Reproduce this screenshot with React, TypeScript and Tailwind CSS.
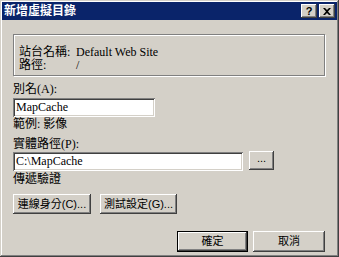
import React from "react";

const cjk = "font-['Liberation_Serif','Noto_Sans_CJK_TC',serif]";
const ui = "font-['Liberation_Sans','Noto_Sans_CJK_TC',sans-serif]";

const raised =
	"bg-[#d4d0c8] shadow-[inset_-1px_-1px_#404040,inset_1px_1px_#ffffff,inset_-2px_-2px_#808080,inset_2px_2px_#d4d0c8]";
const sunken =
	"bg-white shadow-[inset_1px_1px_#808080,inset_-1px_-1px_#ffffff,inset_2px_2px_#404040,inset_-2px_-2px_#d4d0c8]";

function Btn({
	children,
	className = "",
}: {
	children: React.ReactNode;
	className?: string;
}) {
	return (
		<div
			className={`${raised} ${ui} flex items-center justify-center text-[11px] text-black ${className}`}>
			{children}
		</div>
	);
}

export default function App() {
	return (
		<div
			className={`w-[339px] h-[257px] bg-[#d4d0c8] p-[2px] flex flex-col shadow-[inset_-1px_-1px_#404040,inset_1px_1px_#d4d0c8,inset_-2px_-2px_#808080,inset_2px_2px_#ffffff] ${cjk} text-[12px] leading-[13px] text-black`}>
			{/* title bar */}
			<div className="h-[18px] bg-[#0a246a] flex items-center pl-[2px] pr-[2px]">
				<span className="text-white font-bold text-[12px] leading-[12px] flex-1">
					新增虛擬目錄
				</span>
				<div
					className={`${raised} w-[16px] h-[14px] flex items-center justify-center font-bold text-[11px] leading-none ${ui}`}>
					?
				</div>
				<div
					className={`${raised} w-[16px] h-[14px] ml-[2px] flex items-center justify-center`}>
					<svg width="8" height="7" viewBox="0 0 8 7">
						<path
							d="M0 0h2l2 2 2-2h2L5 3.5 8 7H6L4 5 2 7H0l3-3.5z"
							fill="#000"
						/>
					</svg>
				</div>
			</div>

			<div className="flex flex-col pl-[11px] pr-[12px]">
				{/* group box */}
				<div className="mt-[14px] h-[42px] border border-[#808080] shadow-[inset_1px_1px_#ffffff,1px_1px_#ffffff] pl-[5px] pt-[11px]">
					<div className="flex h-[13px]">
						<span className="w-[57px]">站台名稱:</span>
						<span>Default Web Site</span>
					</div>
					<div className="flex h-[13px]">
						<span className="w-[57px]">路徑:</span>
						<span>/</span>
					</div>
				</div>

				<div className="mt-[7px] h-[13px]">別名(A):</div>
				<div
					className={`${sunken} mt-[2px] w-[142px] h-[19px] flex items-center pl-[3px] text-[12px]`}>
					MapCache
				</div>
				<div className="mt-[1px] h-[13px]">範例: 影像</div>

				<div className="mt-[7px] h-[13px]">實體路徑(P):</div>
				<div className="mt-[1px] flex items-center">
					<div
						className={`${sunken} w-[230px] h-[19px] flex items-center pl-[3px] text-[12px]`}>
						C:\MapCache
					</div>
					<Btn className="ml-[6px] w-[25px] h-[19px] -mt-[2px] pb-[4px]">...</Btn>
				</div>
				<div className="mt-[2px] h-[13px]">傳遞驗證</div>

				<div className="mt-[8px] flex gap-[9px]">
					<Btn className="w-[78px] h-[20px]">連線身分(C)...</Btn>
					<Btn className="w-[77px] h-[20px]">測試設定(G)...</Btn>
				</div>

				<div className="mt-[17px] flex justify-end gap-[5px]">
					<div className="border border-black w-[71px] h-[21px] flex">
						<Btn className="flex-1">確定</Btn>
					</div>
					<Btn className="w-[72px] h-[21px]">取消</Btn>
				</div>
			</div>
		</div>
	);
}
